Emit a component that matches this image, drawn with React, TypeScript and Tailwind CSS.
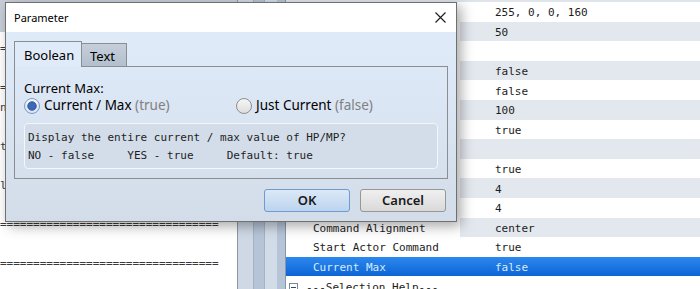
import React from "react";

const mono = { fontFamily: '"DejaVu Sans Mono", "Liberation Mono", monospace' };

type Row = { name: string; value: string; selected?: boolean };

const rows: Row[] = [
  { name: "Gauge Color", value: "255, 0, 0, 160" },
  { name: "Gauge Height", value: "50" },
  { name: "", value: "" },
  { name: "Show Face", value: "false" },
  { name: "Show Level", value: "false" },
  { name: "Width", value: "100" },
  { name: "Show Name", value: "true" },
  { name: "", value: "" },
  { name: "Show Command", value: "true" },
  { name: "Columns", value: "4" },
  { name: "Rows", value: "4" },
  { name: "Command Alignment", value: "center" },
  { name: "Start Actor Command", value: "true" },
  { name: "Current Max", value: "false", selected: true },
];

const leftLines: { text: string; color?: string }[] = [
  { text: "=================================" },
  { text: "" },
  { text: "=================================" },
  { text: "n the actor window." },
  { text: "" },
  { text: "t the command." },
  { text: " '", color: "#d9801a" },
  { text: "l the window." },
  { text: "" },
  { text: "=================================" },
  { text: "" },
  { text: "=================================" },
];

function RadioOn() {
  return (
    <svg width="16" height="16" viewBox="0 0 16 16" className="shrink-0">
      <defs>
        <linearGradient id="rg1" x1="0" y1="0" x2="0" y2="1">
          <stop offset="0" stopColor="#f4f8fd" />
          <stop offset="1" stopColor="#d4e2f3" />
        </linearGradient>
      </defs>
      <circle cx="8" cy="8" r="7.5" fill="url(#rg1)" stroke="#7d9ac2" />
      <circle cx="8" cy="8" r="4.3" fill="#3c68b5" stroke="#2c5296" strokeWidth="0.8" />
    </svg>
  );
}

function RadioOff() {
  return (
    <svg width="16" height="16" viewBox="0 0 16 16" className="shrink-0">
      <defs>
        <linearGradient id="rg2" x1="0" y1="0" x2="0" y2="1">
          <stop offset="0" stopColor="#f6f6f6" />
          <stop offset="1" stopColor="#dedede" />
        </linearGradient>
      </defs>
      <circle cx="8" cy="8" r="7.5" fill="url(#rg2)" stroke="#8d8e8f" />
    </svg>
  );
}

export default function App() {
  return (
    <div className="relative w-[700px] h-[289px] overflow-hidden bg-white">
      <div className="flex h-full">
        {/* left editor panel */}
        <div className="w-[237px] shrink-0 flex flex-col text-[11px] text-[#3a3a3a] overflow-hidden" style={mono}>
          <div className="h-[32px] shrink-0 bg-[#c7ced8]" />
          <div className="h-[7px] shrink-0" />
          {leftLines.map((l, i) => (
            <div
              key={i}
              className="h-[19.5px] shrink-0 flex items-center whitespace-pre leading-none"
              style={l.color ? { color: l.color } : undefined}
            >
              {l.text}
            </div>
          ))}
        </div>
        <div className="w-px shrink-0 bg-[#8d97a4]" />
        {/* tree indent bars */}
        <div className="flex shrink-0">
          <div className="w-[16px] bg-[#cfd9e5] border-r border-[#a4b2c3]" />
          <div className="w-[11px] bg-[#b5c5d7] border-r border-[#a4b2c3]" />
          <div className="w-[12px] bg-[#d2dce8]" />
          <div className="w-[9px] bg-[#b5c5d7] border-r border-[#8796aa]" />
        </div>
        {/* property list */}
        <div className="flex-1 flex flex-col text-[11px] leading-[14px] text-[#1c1c1c]" style={mono}>
          <div className="h-[2px] shrink-0 bg-[#dfe4ea]" />
          {rows.map((r, i) => (
            <div
              key={i}
              className={
                r.selected
                  ? "h-[19.6px] shrink-0 flex items-stretch bg-gradient-to-b from-[#2b88ee] to-[#0a65d5] text-[#d8e9ff]"
                  : "h-[19.6px] shrink-0 flex items-stretch"
              }
            >
              <div className="w-[174px] shrink-0 pl-[27px] pt-[3px] flex items-center whitespace-pre">{r.name}</div>
              <div
                className={
                  !r.selected && i % 2 === 1
                    ? "flex-1 flex items-center pl-[35px] pt-[3px] bg-[#e3e8ee] whitespace-pre"
                    : "flex-1 flex items-center pl-[35px] pt-[3px] whitespace-pre"
                }
              >
                {r.value}
              </div>
            </div>
          ))}
          <div className="h-[19.6px] shrink-0 flex items-center pl-[3px] pt-[3px] gap-[8px]">
            <div className="w-[9px] h-[9px] border border-[#7a8797] bg-white flex items-center justify-center">
              <div className="w-[5px] h-px bg-[#2a4b7a]" />
            </div>
            <span className="whitespace-pre">---Selection Help---</span>
          </div>
        </div>
      </div>

      {/* dialog */}
      <div
        className="absolute left-[5px] top-[2px] w-[452px] h-[220px] border border-[#707070] bg-white flex flex-col shadow-[4px_4px_12px_rgba(0,0,0,0.35)]"
        style={{ fontFamily: '"Noto Sans", "Liberation Sans", sans-serif' }}
      >
        <div className="h-[29px] shrink-0 flex items-center justify-between pl-[8px] pr-[10px] bg-white">
          <span className="text-[11px] leading-[16px] text-black">Parameter</span>
          <svg width="11" height="11" viewBox="0 0 11 11">
            <path d="M0.5 0.5 L10.5 10.5 M10.5 0.5 L0.5 10.5" stroke="#1a1a1a" strokeWidth="1.1" />
          </svg>
        </div>
        <div className="flex-1 flex flex-col px-[8px] pt-[9px] bg-gradient-to-b from-[#e0ebfa] to-[#d3dde9]">
          {/* tabs */}
          <div className="h-[26px] shrink-0 flex items-end relative z-10 -mb-px">
            <div className="w-[68px] h-[26px] border border-b-0 border-[#8a8d92] bg-[#e0ebf9] flex items-center pl-[9px] pt-[2px] text-[13px] leading-[17px] text-black">
              Boolean
            </div>
            <div className="w-[45px] h-[23px] border-t border-r border-[#8a8d92] bg-gradient-to-b from-[#c5cfdb] to-[#b3bfcc] flex items-center pl-[8px] pt-[2px] text-[13px] leading-[17px] text-black mb-px">
              Text
            </div>
          </div>
          {/* panel */}
          <div className="h-[113px] shrink-0 border border-[#8a8d92] flex flex-col px-[9px] pt-[13px]">
            <div className="h-[17px] flex items-center text-[13px] leading-[17px] text-black">Current Max:</div>
            <div className="h-[17px] flex items-center text-[13.5px] leading-[17px] text-black">
              <div className="w-[212px] flex items-center gap-[4px]">
                <RadioOn />
                <span className="whitespace-pre">
                  Current / Max <span className="text-[#808080]">(true)</span>
                </span>
              </div>
              <div className="flex items-center gap-[4px]">
                <RadioOff />
                <span className="whitespace-pre">
                  Just Current <span className="text-[#808080]">(false)</span>
                </span>
              </div>
            </div>
            <div
              className="mt-[9px] h-[46px] border border-[#f3f6fa] rounded-[4px] bg-[#d3dde9] pt-[5px] pl-[3px] text-[11px] leading-[14px] text-[#1e1e1e]"
              style={mono}
            >
              <div className="h-[18px] flex items-center whitespace-pre">Display the entire current / max value of HP/MP?</div>
              <div className="h-[18px] flex items-center whitespace-pre">NO - false     YES - true     Default: true</div>
            </div>
          </div>
          {/* buttons */}
          <div className="mt-[10px] flex justify-end gap-[10px] pr-[2px]">
            <button className="w-[86px] h-[23px] rounded-[3px] border border-[#6f9bd0] bg-gradient-to-b from-[#dbe9f7] to-[#bcd4ee] text-[13px] leading-[17px] font-semibold text-[#1a1a1a]">
              OK
            </button>
            <button className="w-[86px] h-[23px] rounded-[3px] border border-[#979797] bg-gradient-to-b from-[#f0f0f0] to-[#d9d9d9] text-[13px] leading-[17px] font-semibold text-[#1a1a1a]">
              Cancel
            </button>
          </div>
        </div>
      </div>
    </div>
  );
}
